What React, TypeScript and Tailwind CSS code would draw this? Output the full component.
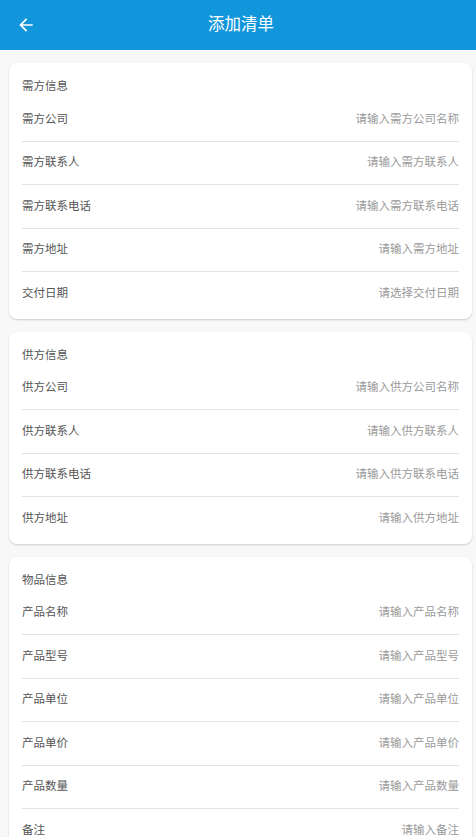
import React from "react";

const sections: { title: string; rows: [string, string][] }[] = [
  {
    title: "需方信息",
    rows: [
      ["需方公司", "请输入需方公司名称"],
      ["需方联系人", "请输入需方联系人"],
      ["需方联系电话", "请输入需方联系电话"],
      ["需方地址", "请输入需方地址"],
      ["交付日期", "请选择交付日期"],
    ],
  },
  {
    title: "供方信息",
    rows: [
      ["供方公司", "请输入供方公司名称"],
      ["供方联系人", "请输入供方联系人"],
      ["供方联系电话", "请输入供方联系电话"],
      ["供方地址", "请输入供方地址"],
    ],
  },
  {
    title: "物品信息",
    rows: [
      ["产品名称", "请输入产品名称"],
      ["产品型号", "请输入产品型号"],
      ["产品单位", "请输入产品单位"],
      ["产品单价", "请输入产品单价"],
      ["产品数量", "请输入产品数量"],
      ["备注", "请输入备注"],
    ],
  },
];

export default function App() {
  return (
    <div className="h-[837px] w-full overflow-hidden bg-[#f8f8f8] font-['Roboto','Noto_Sans_CJK_SC',sans-serif]">
      <header className="relative flex h-[50px] items-center justify-center bg-[#1296db]">
        <svg
          className="absolute left-[16px] top-[15px]"
          width="20"
          height="20"
          viewBox="0 0 24 24"
          fill="white"
        >
          <path d="M20 11H7.83l5.59-5.59L12 4l-8 8 8 8 1.41-1.41L7.83 13H20v-2z" />
        </svg>
        <h1 className="pl-[6px] text-[16.5px] leading-[20px] text-white">添加清单</h1>
      </header>
      <main className="flex flex-col gap-[13px] pl-[9px] pr-[4px] pt-[13px] pb-[13px]">
        {sections.map((s) => (
          <div
            key={s.title}
            className="rounded-[8px] bg-white px-[13px] pb-[3px] shadow-[0_1px_2px_rgba(0,0,0,0.18)]"
          >
            <div className="h-[35px] pt-[15px] text-[11.5px] leading-[17px] text-[#555]">
              {s.title}
            </div>
            {s.rows.map(([label, ph], i) => (
              <div
                key={label}
                className={
                  i < s.rows.length - 1
                    ? "flex h-[43.5px] items-center justify-between border-b border-[#e3e3e3] text-[11.5px]"
                    : "flex h-[43.5px] items-center justify-between text-[11.5px]"
                }
              >
                <span className="text-[#555]">{label}</span>
                <span className="text-[#9a9a9a]">{ph}</span>
              </div>
            ))}
          </div>
        ))}
      </main>
    </div>
  );
}
